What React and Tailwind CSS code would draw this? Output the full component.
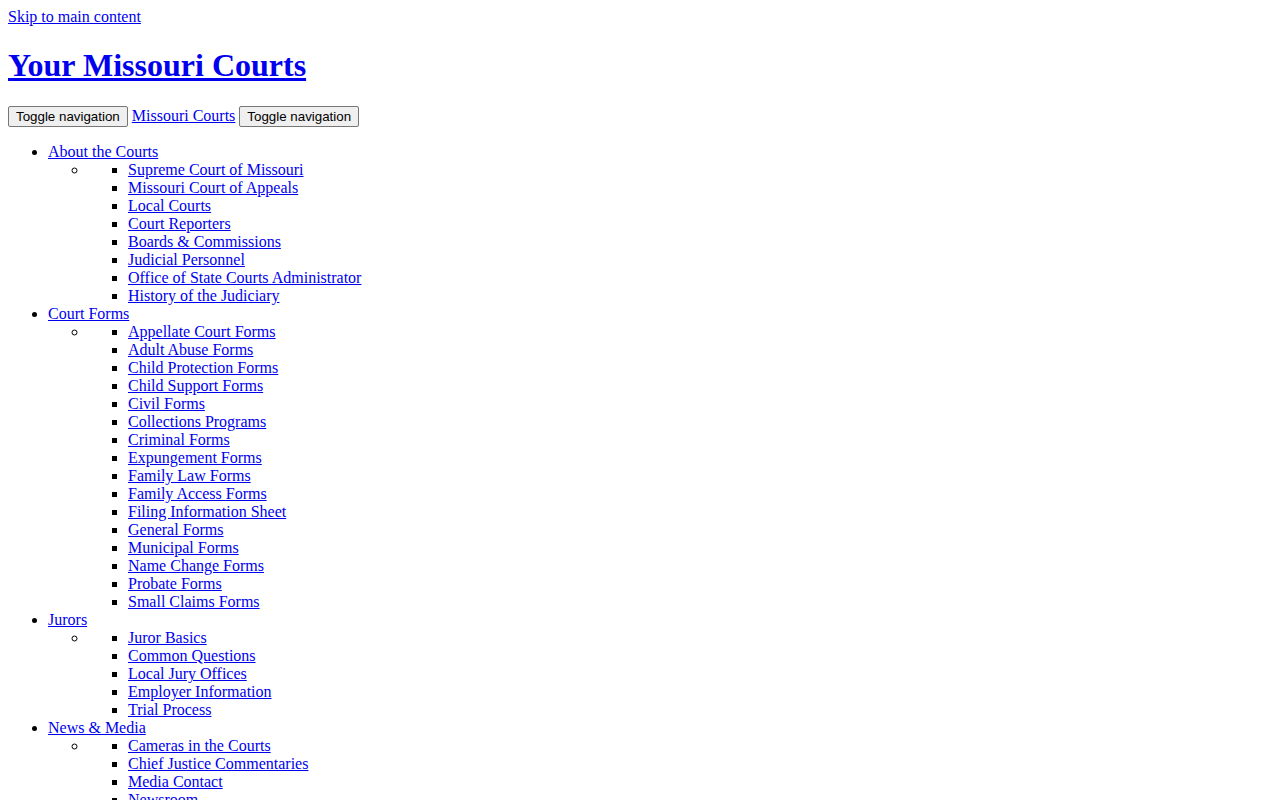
import React from 'react'

const menu = [
  {title: 'About the Courts', items: ['Supreme Court of Missouri', 'Missouri Court of Appeals', 'Local Courts', 'Court Reporters', 'Boards & Commissions', 'Judicial Personnel', 'Office of State Courts Administrator', 'History of the Judiciary']},
  {title: 'Court Forms', items: ['Appellate Court Forms', 'Adult Abuse Forms', 'Child Protection Forms', 'Child Support Forms', 'Civil Forms', 'Collections Programs', 'Criminal Forms', 'Expungement Forms', 'Family Law Forms', 'Family Access Forms', 'Filing Information Sheet', 'General Forms', 'Municipal Forms', 'Name Change Forms', 'Probate Forms', 'Small Claims Forms']},
  {title: 'Jurors', items: ['Juror Basics', 'Common Questions', 'Local Jury Offices', 'Employer Information', 'Trial Process']},
  {title: 'News & Media', items: ['Cameras in the Courts', 'Chief Justice Commentaries', 'Media Contact', 'Newsroom', 'Press Releases']},
]

const link = 'text-[#0000ee] underline'
const btn = "bg-[#efefef] border border-[#767676] rounded-[2px] px-[7px] py-[2px] text-[13.33px] text-black font-['Liberation_Sans',Arial,sans-serif] leading-[normal] align-baseline"

export default function App(){
  return (
    <div className="min-h-screen bg-white text-black font-['Liberation_Serif','Times_New_Roman',serif] text-base leading-[normal]">
      <div className="p-2">
        <a href="#main" className={link}>Skip to main content</a>
        <h1 className="text-[32px] font-bold leading-[37px] my-[21.44px]">
          <a href="#" className={link}>Your Missouri Courts</a>
        </h1>
        <div>
          <button className={btn}>Toggle navigation</button>{' '}
          <a href="#" className={link}>Missouri Courts</a>{' '}
          <button className={btn}>Toggle navigation</button>
        </div>
        <ul className="list-disc pl-10 my-4">
          {menu.map(m => (
            <li key={m.title}>
              <a href="#" className={link}>{m.title}</a>
              <ul className="list-[circle] pl-10">
                <li>
                  <ul className="list-[square] pl-10">
                    {m.items.map(i => (
                      <li key={i}><a href="#" className={link}>{i}</a></li>
                    ))}
                  </ul>
                </li>
              </ul>
            </li>
          ))}
        </ul>
      </div>
    </div>
  )
}
